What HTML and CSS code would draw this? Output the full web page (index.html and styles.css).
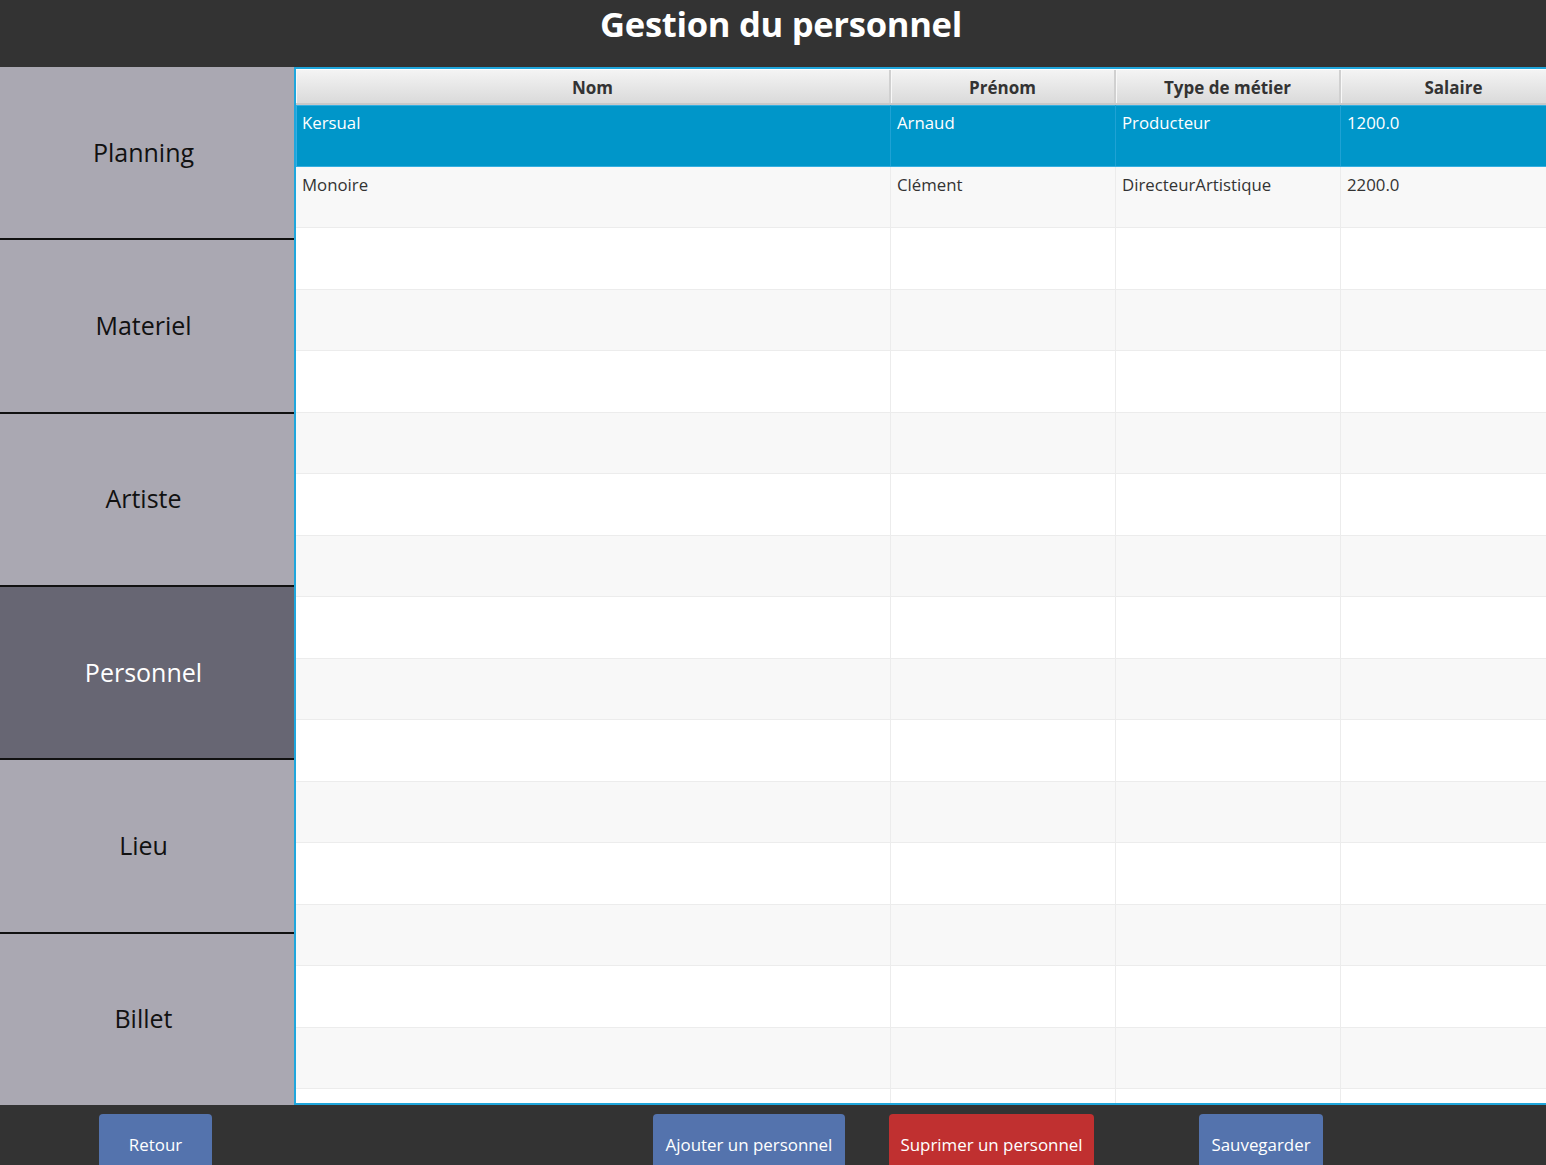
FILE: index.html
```html
<!DOCTYPE html>
<html lang="fr">
<head>
<meta charset="utf-8">
<title>Gestion du personnel</title>
<link rel="stylesheet" href="styles.css">
</head>
<body>
<div class="app">
  <header class="topbar"><h1 class="title">Gestion du personnel</h1></header>
  <main class="middle">
    <nav class="sidebar">
      <div class="nav-item">Planning</div>
      <div class="nav-item">Materiel</div>
      <div class="nav-item">Artiste</div>
      <div class="nav-item active">Personnel</div>
      <div class="nav-item">Lieu</div>
      <div class="nav-item last">Billet</div>
    </nav>
    <section class="table">
      <div class="thead">
        <div class="th">Nom</div>
        <div class="th">Prénom</div>
        <div class="th">Type de métier</div>
        <div class="th">Salaire</div>
      </div>
      <div class="tbody">
        <div class="tr selected"><div class="td">Kersual</div><div class="td">Arnaud</div><div class="td">Producteur</div><div class="td">1200.0</div></div>
        <div class="tr alt"><div class="td">Monoire</div><div class="td">Clément</div><div class="td">DirecteurArtistique</div><div class="td">2200.0</div></div>
        <div class="tr"><div class="td"></div><div class="td"></div><div class="td"></div><div class="td"></div></div>
        <div class="tr alt"><div class="td"></div><div class="td"></div><div class="td"></div><div class="td"></div></div>
        <div class="tr"><div class="td"></div><div class="td"></div><div class="td"></div><div class="td"></div></div>
        <div class="tr alt"><div class="td"></div><div class="td"></div><div class="td"></div><div class="td"></div></div>
        <div class="tr"><div class="td"></div><div class="td"></div><div class="td"></div><div class="td"></div></div>
        <div class="tr alt"><div class="td"></div><div class="td"></div><div class="td"></div><div class="td"></div></div>
        <div class="tr"><div class="td"></div><div class="td"></div><div class="td"></div><div class="td"></div></div>
        <div class="tr alt"><div class="td"></div><div class="td"></div><div class="td"></div><div class="td"></div></div>
        <div class="tr"><div class="td"></div><div class="td"></div><div class="td"></div><div class="td"></div></div>
        <div class="tr alt"><div class="td"></div><div class="td"></div><div class="td"></div><div class="td"></div></div>
        <div class="tr"><div class="td"></div><div class="td"></div><div class="td"></div><div class="td"></div></div>
        <div class="tr alt"><div class="td"></div><div class="td"></div><div class="td"></div><div class="td"></div></div>
        <div class="tr"><div class="td"></div><div class="td"></div><div class="td"></div><div class="td"></div></div>
        <div class="tr alt"><div class="td"></div><div class="td"></div><div class="td"></div><div class="td"></div></div>
        <div class="tr"><div class="td"></div><div class="td"></div><div class="td"></div><div class="td"></div></div>
      </div>
    </section>
  </main>
  <footer class="footer">
    <button class="btn btn-back">Retour</button>
    <button class="btn btn-add">Ajouter un personnel</button>
    <button class="btn btn-del">Suprimer un personnel</button>
    <button class="btn btn-save">Sauvegarder</button>
  </footer>
</div>
</body>
</html>
```
FILE: styles.css
```css
* { box-sizing: border-box; }
html, body { margin: 0; padding: 0; }
body {
  width: 1546px;
  height: 1165px;
  overflow: hidden;
  background: #333333;
  font-family: "Open Sans", "Noto Sans", "DejaVu Sans", sans-serif;
}
.app {
  display: grid;
  grid-template-rows: 67px 1038px 60px;
  height: 1165px;
  width: 1546px;
  overflow: hidden;
}
.topbar {
  background: #333333;
  display: flex;
  justify-content: center;
  align-items: flex-start;
}
.title {
  margin: 0;
  padding-top: 1px;
  padding-left: 16px;
  color: #ffffff;
  font-size: 34.6px;
  font-weight: 700;
  line-height: 46px;
  letter-spacing: -0.3px;
}
.middle {
  display: flex;
  overflow: hidden;
  min-height: 0;
}
.sidebar {
  width: 294px;
  flex: 0 0 294px;
  display: flex;
  flex-direction: column;
  background: #aaa8b2;
}
.nav-item {
  flex: 1 1 0;
  display: flex;
  align-items: center;
  justify-content: center;
  background: #aaa8b2;
  color: #111111;
  font-size: 25px;
  border-bottom: 2px solid #111111;
  padding-bottom: 2px;
  padding-right: 7px;
}
.nav-item.last { border-bottom: 0; }
.nav-item.active {
  background: #676673;
  color: #ffffff;
}
.table {
  flex: 0 0 1290px;
  width: 1290px;
  background: #ffffff;
  border: 2px solid #1fa6dc;
  border-right: 0;
  overflow: hidden;
  display: flex;
  flex-direction: column;
}
.thead {
  display: grid;
  grid-template-columns: 595px 225px 225px 225px;
  height: 36px;
  flex: 0 0 36px;
  background: linear-gradient(#f4f4f4, #dadada);
  border-top: 1px solid #ffffff;
  border-bottom: 2px solid #c8c8c8;
}
.th {
  display: flex;
  align-items: center;
  justify-content: center;
  padding-top: 1px;
  font-size: 17px;
  font-weight: 700;
  color: #333333;
  border-right: 2px solid #d0d0d0;
  box-shadow: inset 1px 0 0 #f8f8f8;
}
.th:last-child { border-right: 0; }
.tbody {
  display: flex;
  flex-direction: column;
}
.tr {
  display: grid;
  grid-template-columns: 595px 225px 225px 225px;
  height: 61.5px;
  flex: 0 0 61.5px;
  background: #ffffff;
  border-bottom: 1px solid #ececec;
}
.tr.alt { background: #f8f8f8; }
.td {
  padding: 6px 6px 0;
  font-size: 16.8px;
  line-height: 24px;
  color: #333333;
  border-right: 1px solid #ececec;
}
.td:last-child { border-right: 0; }
.tr.selected {
  background: #0096c9;
  border-bottom-color: #35aee0;
  box-shadow: inset 0 1px 0 #35aee0, inset 1px 0 0 #35aee0;
}
.tr.selected .td {
  color: #ffffff;
  border-right-color: #1fa2d4;
}
.footer {
  background: #333333;
  display: flex;
  align-items: flex-start;
  padding-top: 9px;
}
.btn {
  height: 62px;
  border: 0;
  border-radius: 4px;
  color: #ffffff;
  font-family: "Open Sans", "Noto Sans", "DejaVu Sans", sans-serif;
  font-size: 16.9px;
  padding: 0;
  display: flex;
  align-items: center;
  justify-content: center;
  padding-bottom: 1px;
  background: #5473ad;
}
.btn-back { margin-left: 99px; width: 113px; }
.btn-add { margin-left: 441px; width: 192px; }
.btn-del { margin-left: 44px; width: 205px; background: #c03030; }
.btn-save { margin-left: 105px; width: 124px; }
```
